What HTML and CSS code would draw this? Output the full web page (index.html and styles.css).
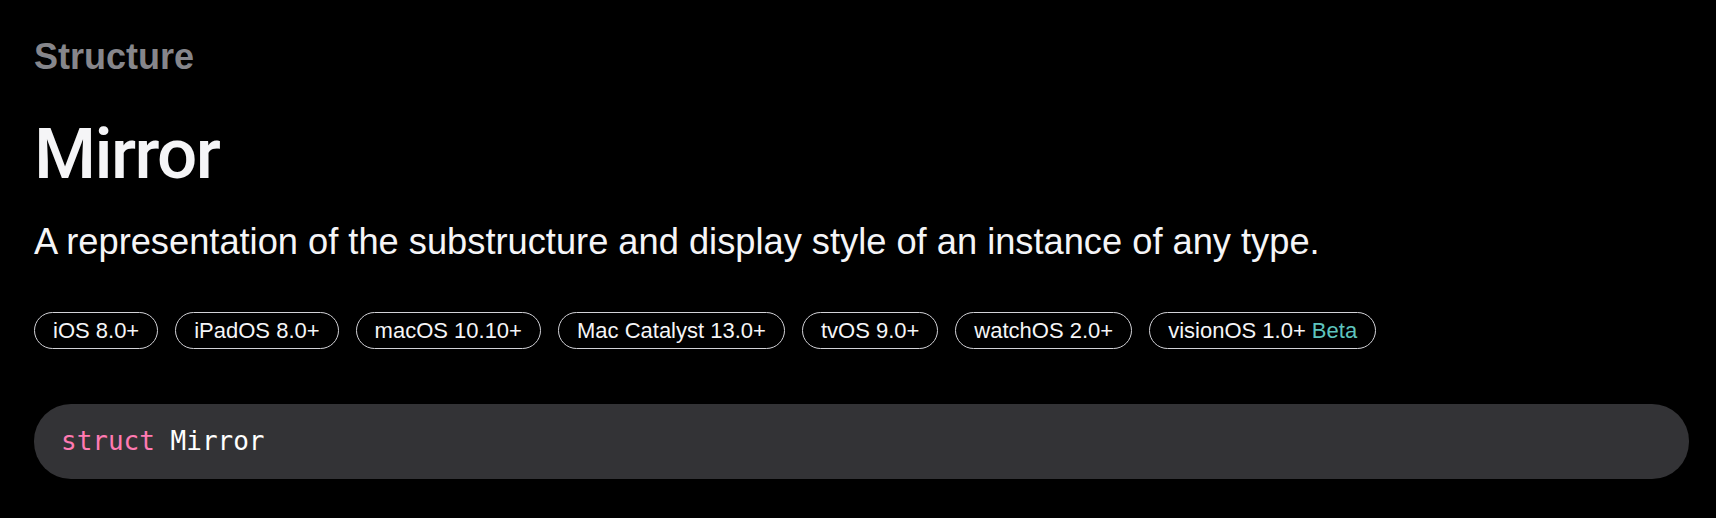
FILE: index.html
```html
<!DOCTYPE html>
<html lang="en">
<head>
  <meta charset="UTF-8">
  <meta name="viewport" content="width=device-width, initial-scale=1.0">
  <title>Mirror | Apple Developer Documentation</title>
  <link rel="stylesheet" href="styles.css">
</head>
<body>
  <main class="doc-header">
    <div class="eyebrow">Structure</div>
    <h1 class="title">Mirror</h1>
    <p class="abstract">A representation of the substructure and display style of an instance of any type.</p>

    <ul class="platforms">
      <li class="platform">iOS 8.0+</li>
      <li class="platform">iPadOS 8.0+</li>
      <li class="platform">macOS 10.10+</li>
      <li class="platform">Mac Catalyst 13.0+</li>
      <li class="platform">tvOS 9.0+</li>
      <li class="platform">watchOS 2.0+</li>
      <li class="platform">visionOS 1.0+ <span class="beta">Beta</span></li>
    </ul>

    <pre class="declaration"><code><span class="kw">struct</span> Mirror</code></pre>
  </main>
</body>
</html>
```

FILE: styles.css
```css
html, body {
  margin: 0;
  padding: 0;
  background: #000;
  color: #f5f5f7;
  font-family: "Liberation Sans", Arial, sans-serif;
}
.doc-header {
  padding: 37px 27px 0 34px;
}
.eyebrow {
  font-size: 36px;
  line-height: 40px;
  font-weight: 700;
  color: #86868b;
}
.title {
  margin: 37px 0 0;
  font-family: Roboto, "Liberation Sans", sans-serif;
  font-size: 71px;
  line-height: 80px;
  font-weight: 500;
  letter-spacing: -1.6px;
  color: #f5f5f7;
}
.abstract {
  margin: 26px 0 0;
  font-size: 36.25px;
  line-height: 44px;
  color: #f5f5f7;
}
.platforms {
  list-style: none;
  margin: 48px 0 0;
  padding: 0;
  display: flex;
  flex-wrap: wrap;
  gap: 17px;
}
.platform {
  border: 1px solid #d2d2d7;
  border-radius: 20px;
  padding: 0 18px;
  font-size: 22px;
  line-height: 35px;
  color: #f5f5f7;
}
.beta {
  color: #5ec4be;
}
.declaration {
  margin: 55px 0 0;
  background: #333336;
  border-radius: 37px;
  padding: 2px 27px 0;
  font-family: "Liberation Mono", "DejaVu Sans Mono", monospace;
  font-size: 26px;
  line-height: 71px;
  color: #fff;
}
.kw {
  color: #ff7ab2;
}
```
